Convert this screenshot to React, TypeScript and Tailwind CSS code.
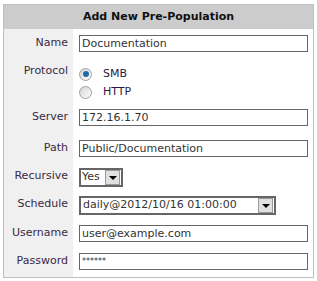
const font = { fontFamily: '"DejaVu Sans", Verdana, sans-serif' };

const Row = ({ label, children, h }: { label: string; children: React.ReactNode; h: string }) => (
  <div className={`flex ${h}`}>
    <div className="w-[69px] shrink-0 bg-[#f0f0f0] pr-[5px] pt-[6px] text-right text-[11px] text-[#3a2a44]">{label}</div>
    <div className="flex-1 pl-[6px] pt-[6px]">{children}</div>
  </div>
);

const TextBox = ({ value, small }: { value: string; small?: boolean }) => (
  <div className={`h-[17px] w-[229px] border border-[#666] bg-white pl-[2px] leading-[15px] text-[#333] ${small ? 'text-[8px]' : 'text-[11px]'}`}>
    {value}
  </div>
);

const Arrow = () => (
  <div className="flex h-[15px] w-[15px] items-center justify-center border border-[#999] bg-[#e0e0e0]">
    <div className="h-0 w-0 border-x-[4px] border-t-[4px] border-x-transparent border-t-black" />
  </div>
);

const Radio = ({ on, label }: { on?: boolean; label: string }) => (
  <div className="flex h-[18px] items-center gap-[11px]">
    <div className="flex h-[13px] w-[13px] items-center justify-center rounded-full border border-[#a0a0a0] bg-gradient-to-br from-[#d4d4d4] to-white">
      {on && <div className="h-[6px] w-[6px] rounded-full bg-[#1e6aa8]" />}
    </div>
    <span className="text-[11px] text-[#2a1a44]">{label}</span>
  </div>
);

export default function App() {
  return (
    <div className="h-[281px] w-[317px] bg-white pl-[3px] pt-[4px]" style={font}>
      <div className="w-[311px] border border-[#c0c0c0]">
        <div className="h-[24px] bg-[#cccccc] text-center text-[11px] font-bold leading-[24px] text-[#111]">
          Add New Pre-Population
        </div>
        <Row label="Name" h="h-[28px]">
          <TextBox value="Documentation" />
        </Row>
        <Row label="Protocol" h="h-[46px]">
          <div className="pt-[2px]">
            <Radio on label="SMB" />
            <Radio label="HTTP" />
          </div>
        </Row>
        <Row label="Server" h="h-[31px]">
          <TextBox value="172.16.1.70" />
        </Row>
        <Row label="Path" h="h-[28px]">
          <TextBox value="Public/Documentation" />
        </Row>
        <Row label="Recursive" h="h-[28px]">
          <div className="flex h-[19px] w-[44px] items-center justify-between border-2 border-[#666] bg-white pl-[1px] pr-[1px] text-[11px] text-[#333]">
            Yes <Arrow />
          </div>
        </Row>
        <Row label="Schedule" h="h-[29px]">
          <div className="flex h-[19px] w-[197px] items-center justify-between border-2 border-[#666] bg-white pl-[2px] pr-[1px] text-[11px] text-[#333]">
            daily@2012/10/16 01:00:00 <Arrow />
          </div>
        </Row>
        <Row label="Username" h="h-[28px]">
          <TextBox value="user@example.com" />
        </Row>
        <Row label="Password" h="h-[30px]">
          <TextBox value="******" small />
        </Row>
      </div>
    </div>
  );
}
